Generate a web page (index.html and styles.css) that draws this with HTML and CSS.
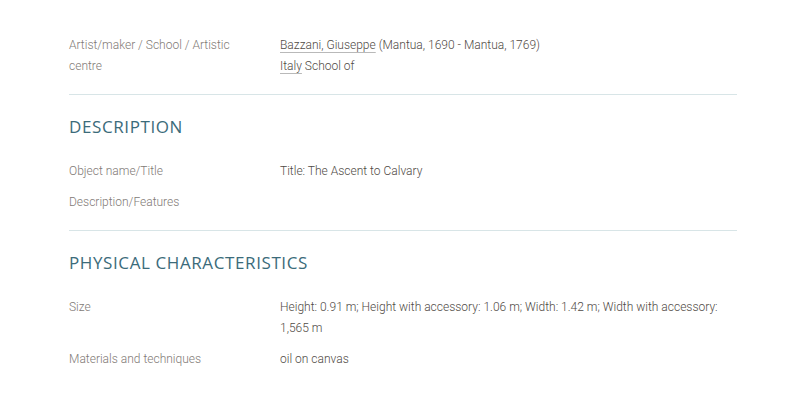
FILE: index.html
```html
<!DOCTYPE html>
<html lang="en">
<head>
<meta charset="utf-8">
<title>The Ascent to Calvary</title>
<link rel="stylesheet" href="styles.css">
</head>
<body>
<main class="sheet">
  <section class="block">
    <dl class="facts">
      <dt>Artist/maker / School / Artistic centre</dt>
      <dd><a href="#">Bazzani, Giuseppe</a> (Mantua, 1690 - Mantua, 1769)<br><a href="#">Italy</a> School of</dd>
    </dl>
  </section>
  <section class="block">
    <h2>DESCRIPTION</h2>
    <dl class="facts">
      <dt>Object name/Title</dt>
      <dd>Title: The Ascent to Calvary</dd>
      <dt>Description/Features</dt>
      <dd></dd>
    </dl>
  </section>
  <section class="block last">
    <h2>PHYSICAL CHARACTERISTICS</h2>
    <dl class="facts">
      <dt>Size</dt>
      <dd>Height: 0.91 m; Height with accessory: 1.06 m; Width: 1.42 m; Width with accessory: 1,565 m</dd>
      <dt>Materials and techniques</dt>
      <dd>oil on canvas</dd>
    </dl>
  </section>
</main>
</body>
</html>
```
FILE: styles.css
```css
html, body {
  margin: 0;
  padding: 0;
  background: #ffffff;
}
body {
  font-family: Roboto, "Liberation Sans", sans-serif;
  font-weight: 300;
  font-size: 12px;
  line-height: 21px;
  color: #4f4a45;
}
.sheet {
  width: 668px;
  margin: 0 auto 0 69px;
  padding-top: 33px;
}
.block {
  border-bottom: 1px solid #d8e5e7;
  padding-bottom: 9px;
}
.block.last {
  border-bottom: none;
}
.block h2 {
  margin: 20px 0 20px;
  font-family: "Open Sans", sans-serif;
  font-weight: 400;
  font-size: 17px;
  line-height: 24px;
  letter-spacing: 0.6px;
  color: #3b6b7a;
}
.facts {
  display: grid;
  grid-template-columns: 180px 1fr;
  column-gap: 31px;
  margin: 0;
}
.facts dt {
  color: #7f7a76;
  margin: 0 0 8px;
  padding-top: 2px;
}
.facts dd {
  margin: 0 0 8px;
  padding-top: 2px;
  color: #4f4a45;
  min-height: 21px;
}
.facts a {
  color: #4f4a45;
  text-decoration: underline;
  text-decoration-color: #b9b9b9;
  text-underline-offset: 3px;
}
```
